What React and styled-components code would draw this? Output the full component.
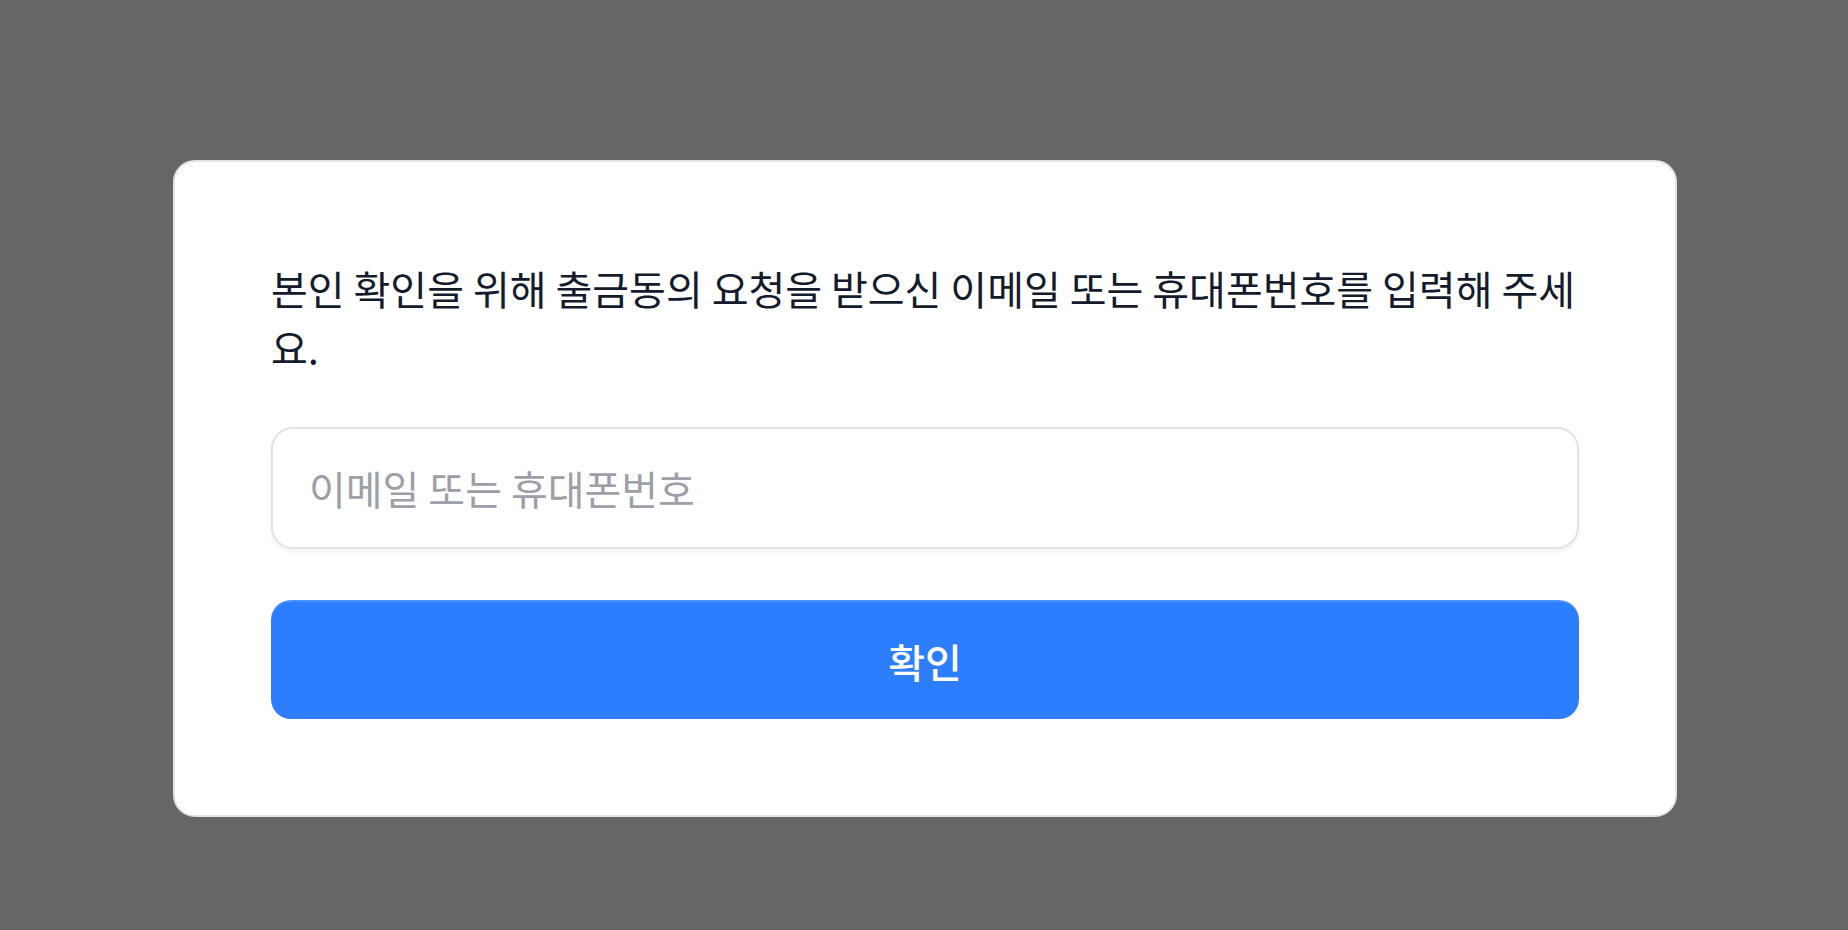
import React from 'react'
import styled, { createGlobalStyle } from 'styled-components'

const GlobalStyle = createGlobalStyle`
  html, body {
    margin: 0;
    padding: 0;
    background: #666666;
  }
  body {
    font-family: "Noto Sans CJK KR", "Noto Sans", sans-serif;
  }
`

function App() {
  return (
    <>
      <GlobalStyle />
      <Page>
        <Card>
          <Message>
            본인 확인을 위해 출금동의 요청을 받으신 이메일 또는 휴대폰번호를 입력해 주세요.
          </Message>
          <Form onSubmit={(e) => e.preventDefault()}>
            <Input type="text" placeholder="이메일 또는 휴대폰번호" />
            <SubmitButton type="submit">확인</SubmitButton>
          </Form>
        </Card>
      </Page>
    </>
  )
}

export default App

const Page = styled.div`
  min-height: 930px;
  box-sizing: border-box;
  padding: 160px 171px 0 173px;
`
const Card = styled.div`
  box-sizing: border-box;
  width: 1504px;
  background: #fff;
  border: 2px solid #e3e3e3;
  border-radius: 22px;
  padding: 97px 96px 96px 96px;
`
const Message = styled.p`
  margin: 0;
  font-size: 40px;
  line-height: 59px;
  color: #141b2d;
  font-weight: 400;
`
const Form = styled.form`
  display: flex;
  flex-direction: column;
  gap: 51px;
  margin-top: 50px;
`
const Input = styled.input`
  box-sizing: border-box;
  width: 100%;
  height: 122px;
  padding: 0 36px;
  border: 2px solid #e2e2e4;
  border-radius: 22px;
  background: #fff;
  box-shadow: 0 3px 4px rgba(0, 0, 0, 0.05);
  font-family: inherit;
  font-size: 40px;
  color: #141b2d;
  outline: none;
  &::placeholder {
    color: #9d9fa8;
  }
`
const SubmitButton = styled.button`
  box-sizing: border-box;
  width: 100%;
  height: 119px;
  border: none;
  border-top: 2px solid #4b91fc;
  border-radius: 20px;
  background: #2d7eff;
  color: #fff;
  font-family: inherit;
  font-size: 40px;
  font-weight: 500;
  cursor: pointer;
`
